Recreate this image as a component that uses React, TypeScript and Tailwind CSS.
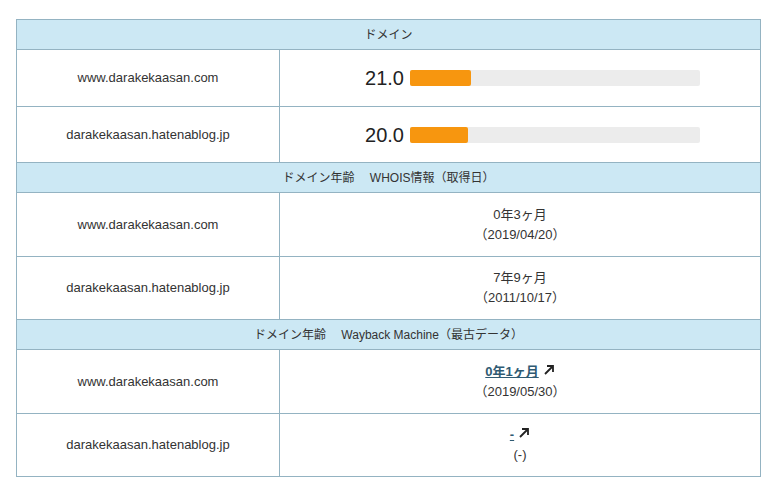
const font = { fontFamily: '"Liberation Sans", "Noto Sans CJK JP", sans-serif' };

const Head = ({ children }: { children: React.ReactNode }) => (
  <tr>
    <td colSpan={2} className="h-[30px] bg-[#cce8f4] border border-[#94b3c2] text-center text-[12px] text-[#333]">
      {children}
    </td>
  </tr>
);

const Score = ({ v, pct, h }: { v: string; pct: number; h: string }) => (
  <td className={`${h} border border-[#94b3c2]`}>
    <div className="flex items-center pl-[76px]">
      <span className="text-[20px] text-[#222] w-[48px] text-right mr-[6px]">{v}</span>
      <div className="w-[290px] h-[16px] bg-[#ececec] rounded-[2px]">
        <div className="h-full bg-[#f7960f] rounded-[2px]" style={{ width: `${pct}%` }} />
      </div>
    </div>
  </td>
);

const Arrow = () => (
  <svg width="12" height="12" viewBox="0 0 12 12" className="inline-block ml-[4px] align-baseline">
    <path d="M2 10L10 2M4 2h6v6" stroke="#222" strokeWidth="1.8" fill="none" />
  </svg>
);

export default function App() {
  const cell = "border border-[#94b3c2] text-center text-[13px] text-[#333]";
  return (
    <div className="bg-white w-[776px] h-[492px] pt-[19px] pl-[16px]" style={font}>
      <table className="w-[745px] border-collapse">
        <colgroup>
          <col className="w-[263px]" />
          <col />
        </colgroup>
        <tbody>
          <Head>ドメイン</Head>
          <tr>
            <td className={`${cell} h-[57px]`}>www.darakekaasan.com</td>
            <Score v="21.0" pct={21} h="h-[57px]" />
          </tr>
          <tr>
            <td className={`${cell} h-[56px]`}>darakekaasan.hatenablog.jp</td>
            <Score v="20.0" pct={20} h="h-[56px]" />
          </tr>
          <Head>ドメイン年齢　 WHOIS情報（取得日）</Head>
          <tr>
            <td className={`${cell} h-[64px]`}>www.darakekaasan.com</td>
            <td className={`${cell} text-[12px] leading-[20px]`}>0年3ヶ月<br />（2019/04/20）</td>
          </tr>
          <tr>
            <td className={`${cell} h-[63px]`}>darakekaasan.hatenablog.jp</td>
            <td className={`${cell} text-[12px] leading-[20px]`}>7年9ヶ月<br />（2011/10/17）</td>
          </tr>
          <Head>ドメイン年齢　 Wayback Machine（最古データ）</Head>
          <tr>
            <td className={`${cell} h-[64px]`}>www.darakekaasan.com</td>
            <td className={`${cell} text-[12px] leading-[20px]`}>
              <span className="underline font-bold text-[#2f5a73]">0年1ヶ月</span><Arrow /><br />（2019/05/30）
            </td>
          </tr>
          <tr>
            <td className={`${cell} h-[63px]`}>darakekaasan.hatenablog.jp</td>
            <td className={`${cell} text-[12px] leading-[20px]`}>
              <span className="underline font-bold text-[#2f5a73]">-</span><Arrow /><br />(-)
            </td>
          </tr>
        </tbody>
      </table>
    </div>
  );
}
